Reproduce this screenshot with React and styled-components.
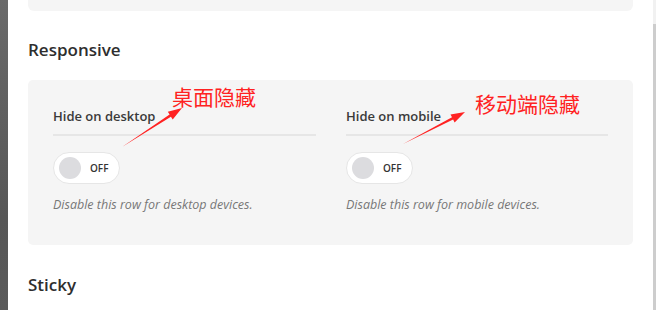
import React from 'react';
import styled, { createGlobalStyle } from 'styled-components';

const GlobalStyle = createGlobalStyle`
    html, body {
        margin: 0;
        padding: 0;
        background: #ffffff;
    }
    body {
        font-family: "Open Sans", "Noto Sans", sans-serif;
        color: #333;
    }
`;

const Page = styled.div`
    position: relative;
    display: flex;
    width: 656px;
    height: 310px;
    overflow: hidden;
    background: #fff;
`;

const SideBar = styled.div`
    width: 8px;
    flex-shrink: 0;
    background: linear-gradient(#6a6a6a 0%, #606060 35%, #575757 70%, #5a5a5a 100%);
`;

const Main = styled.div`
    flex: 1;
    padding: 0 20px;
    display: flex;
    flex-direction: column;
`;

const ScrollTrack = styled.div`
    width: 3px;
    flex-shrink: 0;
    display: flex;
    flex-direction: column;
    background: #f1f1f1;
`;

const ScrollThumb = styled.div`
    margin-top: 24px;
    flex: 1;
    background: #cdcdcd;
`;

const TopCard = styled.div`
    height: 11px;
    background: #f5f5f5;
    border-radius: 0 0 6px 6px;
`;

const SectionTitle = styled.h3`
    margin: ${(p) => p.$top}px 0 0;
    font-size: 17px;
    line-height: 24px;
    font-weight: 600;
    color: #2e2e2e;
`;

const Panel = styled.div`
    margin-top: 18px;
    background: #f5f5f5;
    border-radius: 5px;
    padding: 27px 25px 32px;
    display: grid;
    grid-template-columns: 263px 262px;
    column-gap: 30px;
`;

const Field = styled.div`
    display: flex;
    flex-direction: column;
`;

const Label = styled.div`
    font-size: 13px;
    line-height: 18px;
    font-weight: 600;
    color: #3a3a3a;
    padding-bottom: 9px;
    border-bottom: 2px solid #e6e6e6;
`;

const Toggle = styled.div`
    margin-top: 16px;
    width: 60px;
    height: 30px;
    border: 1px solid #e6e6e6;
    border-radius: 16px;
    background: #fff;
    display: flex;
    align-items: center;
    padding-left: 5px;
    box-sizing: content-box;
`;

const Knob = styled.span`
    width: 22px;
    height: 22px;
    border-radius: 50%;
    background: #dcdcdf;
`;

const ToggleText = styled.span`
    margin-left: 9px;
    font-size: 10px;
    font-weight: 600;
    color: #333;
`;

const Description = styled.div`
    margin-top: 13px;
    font-size: 12.5px;
    line-height: 16px;
    font-style: italic;
    color: #777;
`;

const Note = styled.div`
    position: absolute;
    left: ${(p) => p.$x}px;
    top: ${(p) => p.$y}px;
    font-family: "Noto Sans CJK SC", sans-serif;
    font-size: 21px;
    line-height: 26px;
    color: #ff2222;
    white-space: nowrap;
`;

const ArrowLayer = styled.svg`
    position: absolute;
    left: 0;
    top: 0;
    pointer-events: none;
`;

// tapered arrow polygon from tail to tip
function arrowPoints(x1, y1, x2, y2) {
    const dx = x2 - x1;
    const dy = y2 - y1;
    const len = Math.hypot(dx, dy);
    const ux = dx / len;
    const uy = dy / len;
    const px = -uy;
    const py = ux;
    const bx = x2 - ux * 14;
    const by = y2 - uy * 14;
    const pts = [
        [x1, y1],
        [bx + px * 1.2, by + py * 1.2],
        [bx + px * 4.5, by + py * 4.5],
        [x2, y2],
        [bx - px * 4.5, by - py * 4.5],
        [bx - px * 1.2, by - py * 1.2],
    ];
    return pts.map((p) => p.join(',')).join(' ');
}

const fields = [
    { label: 'Hide on desktop', desc: 'Disable this row for desktop devices.' },
    { label: 'Hide on mobile', desc: 'Disable this row for mobile devices.' },
];

function App() {
    return (
        <>
            <GlobalStyle />
            <Page>
                <SideBar />
                <Main>
                    <TopCard />
                    <SectionTitle $top={27}>Responsive</SectionTitle>
                    <Panel>
                        {fields.map((f) => (
                            <Field key={f.label}>
                                <Label>{f.label}</Label>
                                <Toggle>
                                    <Knob />
                                    <ToggleText>OFF</ToggleText>
                                </Toggle>
                                <Description>{f.desc}</Description>
                            </Field>
                        ))}
                    </Panel>
                    <SectionTitle $top={28}>Sticky</SectionTitle>
                </Main>
                <ScrollTrack>
                    <ScrollThumb />
                </ScrollTrack>

                {/* red annotations */}
                <Note $x={172} $y={83}>桌面隐藏</Note>
                <Note $x={475} $y={90}>移动端隐藏</Note>
                <ArrowLayer width="656" height="310">
                    <polygon points={arrowPoints(122, 147, 182, 108)} fill="#ff2222" />
                    <polygon points={arrowPoints(403, 144, 465, 112)} fill="#ff2222" />
                </ArrowLayer>
            </Page>
        </>
    );
}

export default App;
